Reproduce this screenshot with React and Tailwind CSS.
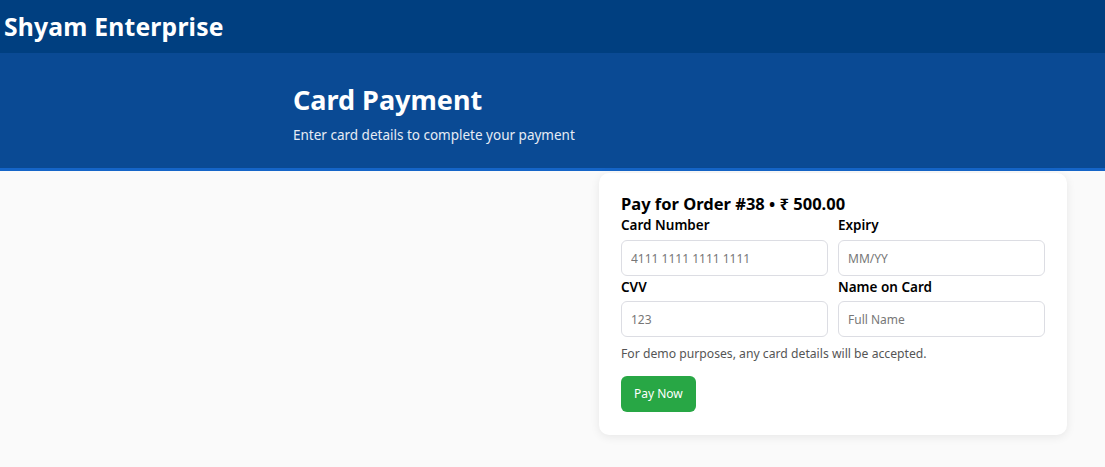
import React, { useState } from "react";

export default function App() {
  const [card, setCard] = useState({ number: "", expiry: "", cvv: "", name: "" });

  const field = "w-full h-9 px-[9px] border border-[#dcdde3] rounded-[6px] bg-white text-[12px] text-[#333] placeholder:text-[#777] outline-none";

  return (
    <div className="min-h-[467px] bg-[#fafafa] font-['Noto_Sans',sans-serif] text-black">
      <header className="h-[53px] bg-[#003f80] flex items-center px-1">
        <h1 className="text-[24.7px] font-bold text-white tracking-[0.2px]">Shyam Enterprise</h1>
      </header>

      <section className="h-[118px] bg-[#0a4a94] border-b-[3px] border-[#1565c8] pl-[293px] pt-[29px]">
        <h2 className="text-[27px] leading-[36px] font-bold text-white">Card Payment</h2>
        <p className="mt-[7px] text-[13.5px] text-[#e6ecf5]">Enter card details to complete your payment</p>
      </section>

      <div className="ml-[599px] mt-[2px] w-[468px] bg-white rounded-[10px] shadow-[0_2px_10px_rgba(0,0,0,0.08)] px-[22px] pt-[19px] pb-[23px]">
        <h3 className="text-[16.5px] leading-[23px] font-bold">Pay for Order #38 • ₹ 500.00</h3>
        <form onSubmit={e => e.preventDefault()}>
          <div className="grid grid-cols-2 gap-x-[10px]">
            <label className="block">
              <span className="block text-[13.5px] font-semibold leading-[20px] mb-[5px]">Card Number</span>
              <input className={field} placeholder="4111 1111 1111 1111" value={card.number} onChange={e => setCard({ ...card, number: e.target.value })} />
            </label>
            <label className="block">
              <span className="block text-[13.5px] font-semibold leading-[20px] mb-[5px]">Expiry</span>
              <input className={field} placeholder="MM/YY" value={card.expiry} onChange={e => setCard({ ...card, expiry: e.target.value })} />
            </label>
            <label className="block mt-[1px]">
              <span className="block text-[13.5px] font-semibold leading-[20px] mb-[4px]">CVV</span>
              <input className={field} placeholder="123" value={card.cvv} onChange={e => setCard({ ...card, cvv: e.target.value })} />
            </label>
            <label className="block mt-[1px]">
              <span className="block text-[13.5px] font-semibold leading-[20px] mb-[4px]">Name on Card</span>
              <input className={field} placeholder="Full Name" value={card.name} onChange={e => setCard({ ...card, name: e.target.value })} />
            </label>
          </div>
          <p className="mt-[8px] text-[12.2px] leading-[18px] text-[#555]">For demo purposes, any card details will be accepted.</p>
          <button className="mt-[13px] h-9 px-[13px] rounded-[6px] bg-[#28a745] text-white text-[12px]">Pay Now</button>
        </form>
      </div>
    </div>
  );
}
